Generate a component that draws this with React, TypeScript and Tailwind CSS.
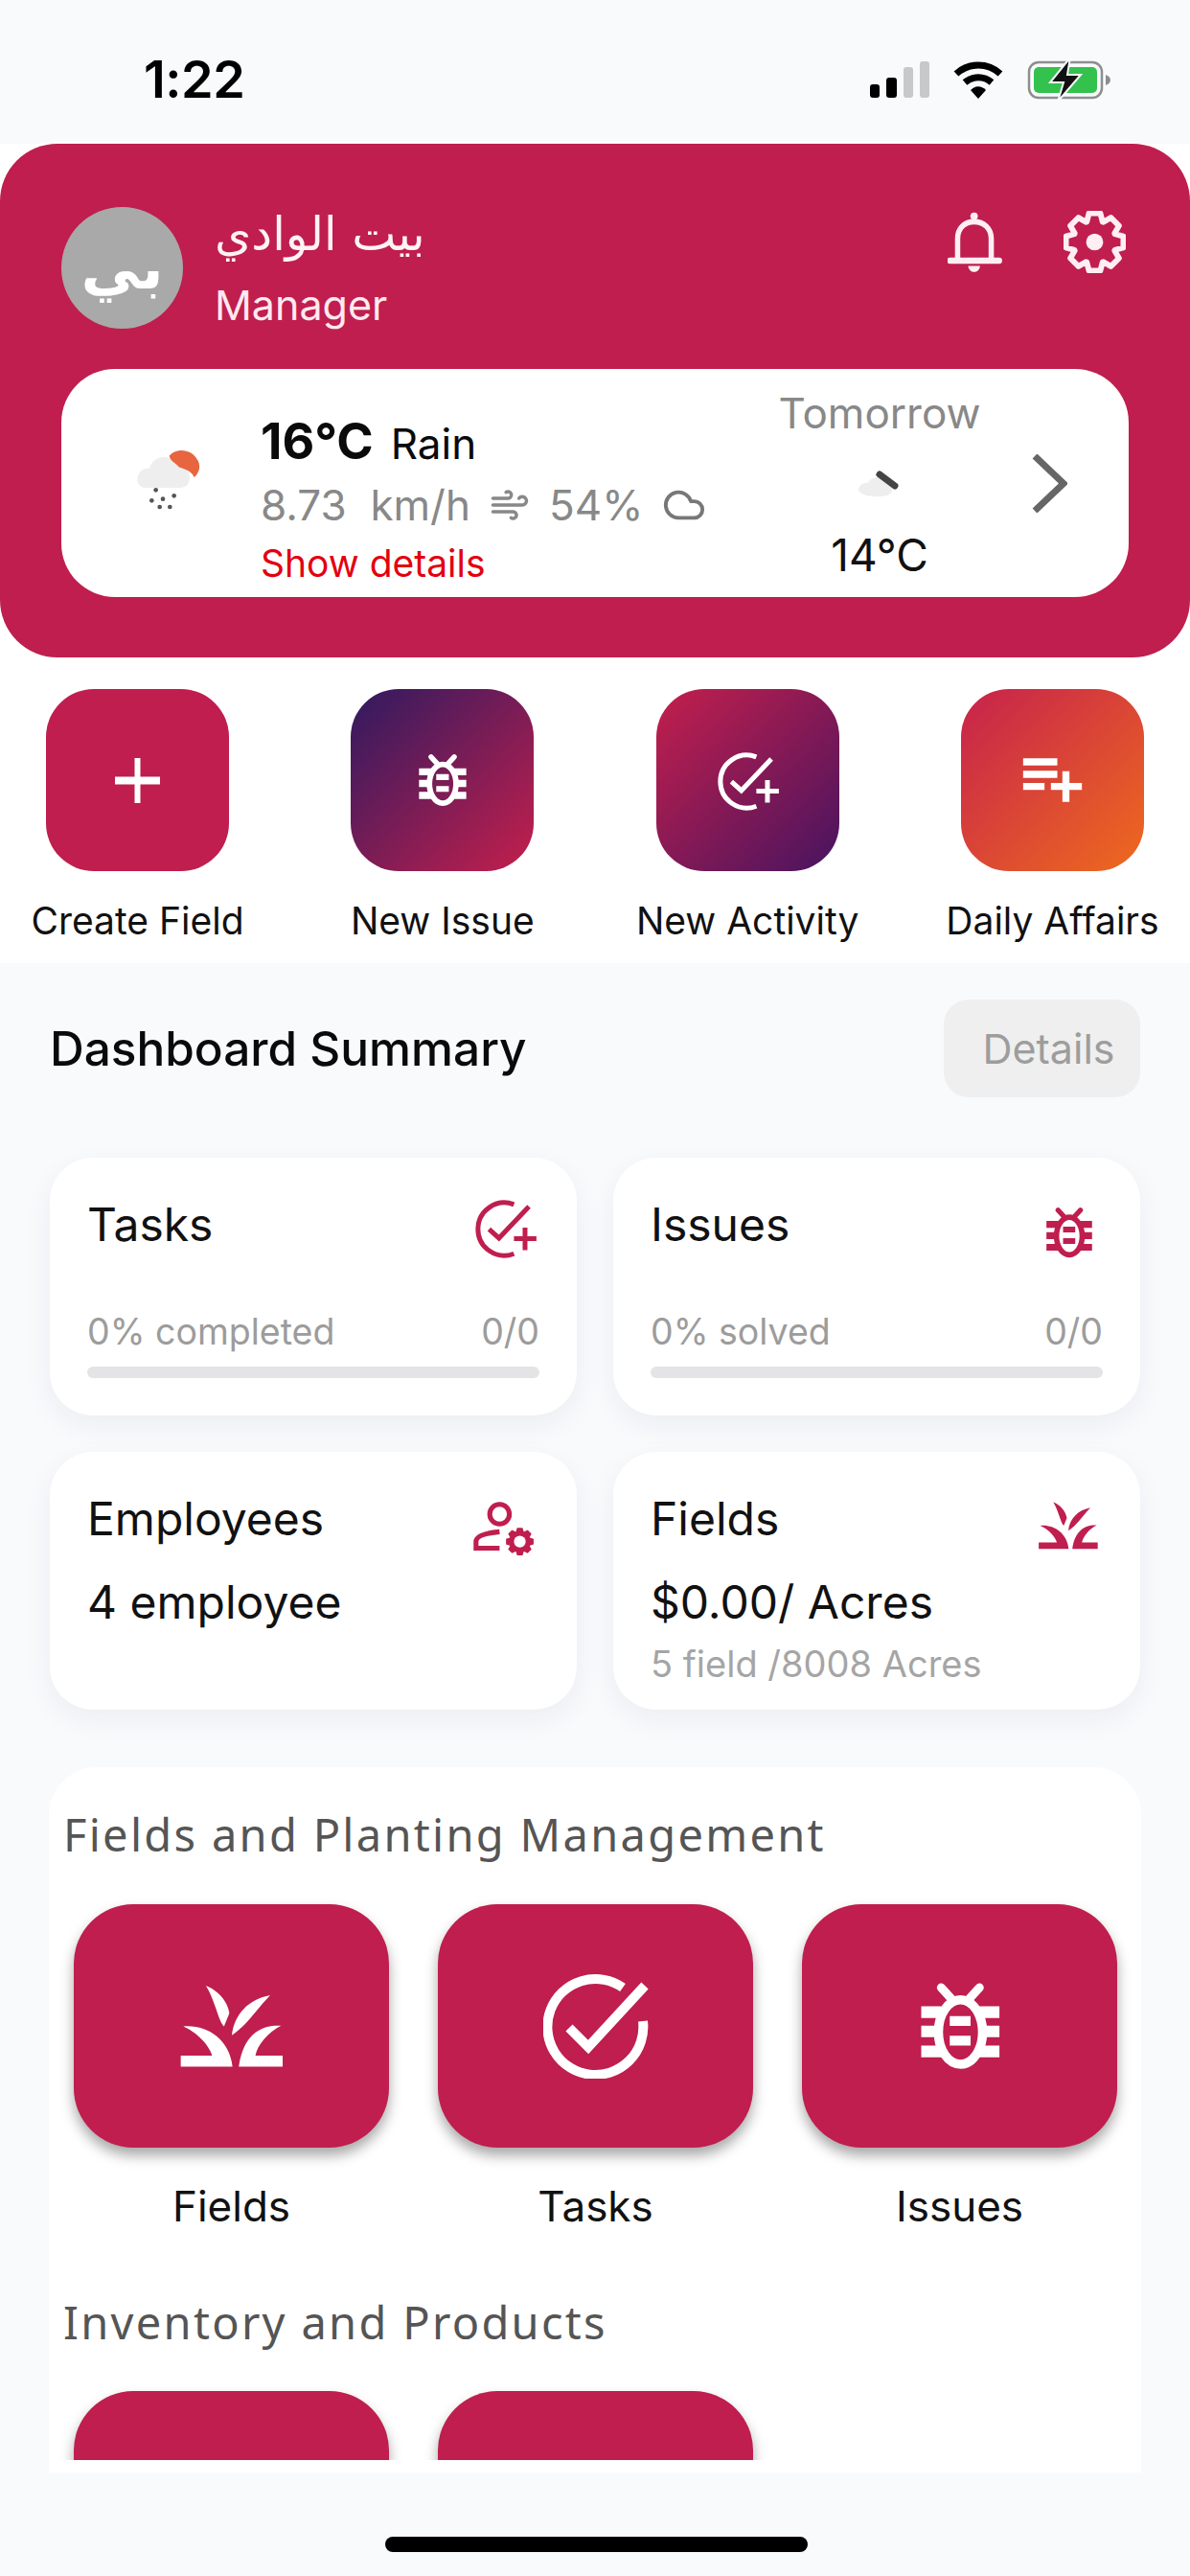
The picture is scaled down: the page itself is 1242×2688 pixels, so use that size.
import { Cloud, Wind } from 'lucide-react'

// 8-tooth cog outline, used by the header gear and the employee icon
function gearPath(cx: number, cy: number, outer: number, inner: number) {
  const pts: string[] = []
  for (let i = 0; i < 8; i++) {
    const a = (i * Math.PI) / 4 - Math.PI / 2
    const s = Math.PI / 8
    const steps: [number, number][] = [
      [a - s * 0.95, inner],
      [a - s * 0.5, outer],
      [a + s * 0.5, outer],
      [a + s * 0.95, inner],
    ]
    steps.forEach(([t, r]) => pts.push(`${(cx + r * Math.cos(t)).toFixed(1)} ${(cy + r * Math.sin(t)).toFixed(1)}`))
  }
  return `M${pts.join('L')}Z`
}

function BugIcon({ className }: { className: string }) {
  return (
    <svg viewBox="75 70 270 300" className={className} fill="none" stroke="currentColor">
      <path d="M85 175H150M85 238H145M85 303H150M275 175H340M280 238H340M275 303H340" strokeWidth="38" />
      <ellipse cx="213" cy="240" rx="72" ry="105" strokeWidth="30" />
      <path d="M150 95L182 130M275 95L243 130" strokeWidth="28" strokeLinecap="round" />
      <path d="M178 204H246M178 268H246" strokeWidth="32" />
    </svg>
  )
}

function TaskPlusIcon({ className }: { className: string }) {
  return (
    <svg viewBox="60 30 230 210" className={className} fill="none" stroke="currentColor" strokeWidth="16">
      <path d="M205 58A88 88 0 1 0 205 222" />
      <path d="M122 140L155 170L255 65" />
      <path d="M205 172H280M242 135V210" />
    </svg>
  )
}

function GrassIcon({ className }: { className: string }) {
  return (
    <svg viewBox="78 120 330 264" className={className} fill="currentColor">
      <path d="M160 122C195 135 230 170 235 210L218 252C200 235 190 170 160 122Z" />
      <path d="M365 153C300 165 250 210 243 280C290 250 320 200 365 153Z" />
      <path d="M88 252C160 245 235 290 245 380L80 380L80 345L180 345C170 310 130 270 88 252Z" />
      <path d="M400 250C340 245 280 275 265 380L405 380L405 345L318 345C325 310 360 270 400 250Z" />
    </svg>
  )
}

function UserCogIcon({ className }: { className: string }) {
  return (
    <svg viewBox="70 50 190 170" className={className} fill="none" stroke="currentColor" strokeWidth="15">
      <circle cx="150" cy="88" r="30" />
      <path d="M150 142C105 146 80 155 78 170V192H150" />
      <path d={gearPath(212, 172, 43, 33)} fill="currentColor" stroke="none" />
      <circle cx="212" cy="172" r="18" fill="white" stroke="none" />
    </svg>
  )
}

function BellIcon() {
  return (
    <svg viewBox="500 535 175 200" className="h-[65px] w-[57px] text-[#ffeef3]" fill="none" stroke="currentColor">
      <path d="M532 695V625C532 590 555 570 585 570C615 570 640 590 640 625V695" strokeWidth="17" />
      <path d="M508 695H665" strokeWidth="20" strokeLinecap="round" />
      <circle cx="585" cy="552" r="12" fill="currentColor" stroke="none" />
      <path d="M566 712H604C602 738 568 738 566 712Z" fill="currentColor" stroke="none" />
    </svg>
  )
}

function GearIcon() {
  return (
    <svg viewBox="0 0 66 66" className="h-[65px] w-[65px] text-[#ffeef3]" fill="none" stroke="currentColor" strokeWidth="6">
      <path d={gearPath(33, 33, 31, 23)} strokeLinejoin="round" />
      <circle cx="33" cy="33" r="9" fill="currentColor" stroke="none" />
    </svg>
  )
}

function RainIcon() {
  return (
    <svg viewBox="0 0 360 300" className="h-[100px] w-[120px] shrink-0">
      <path d="M70 140C70 115 90 102 108 105C115 75 150 60 175 75C215 85 245 120 230 150C220 170 190 165 170 165H100C85 165 70 158 70 140Z" fill="#eeeeee" />
      <path d="M170 65C190 40 240 40 260 80C270 100 262 120 248 132C240 110 210 105 200 100C190 85 175 85 170 65Z" fill="#e8663f" />
      <g fill="#555">
        <circle cx="128" cy="172" r="7" />
        <circle cx="115" cy="205" r="7" />
        <circle cx="150" cy="200" r="7" />
        <circle cx="185" cy="190" r="7" />
        <circle cx="140" cy="225" r="7" />
        <circle cx="172" cy="225" r="7" />
      </g>
    </svg>
  )
}

function TomorrowIcon() {
  return (
    <svg viewBox="0 0 48 30" className="h-[30px] w-[48px]">
      <path d="M2 22C2 16 8 13 12 14C15 7 26 6 32 12C38 14 40 22 34 26C28 29 8 30 2 22Z" fill="#eeeeee" />
      <path d="M24 5L40 17" stroke="#444" strokeWidth="7" strokeLinecap="round" />
    </svg>
  )
}

function StatusIcons() {
  return (
    <div className="flex items-center gap-[25px]">
      <div className="flex h-[38px] items-end gap-[7px]">
        <div className="h-[14px] w-[10px] rounded-[3px] bg-black" />
        <div className="h-[21px] w-[11px] rounded-[3px] bg-black" />
        <div className="h-[32px] w-[10px] rounded-[3px] bg-[#c8c8c8]" />
        <div className="h-[38px] w-[10px] rounded-[3px] bg-[#c8c8c8]" />
      </div>
      <svg viewBox="0 0 52 40" className="h-[40px] w-[52px]" fill="none" stroke="black" strokeWidth="7">
        <path d="M3 14C16 2 36 2 49 14" />
        <path d="M12 23C20 16 32 16 40 23" />
        <path d="M18 31L26 40L34 31C29 26 23 26 18 31Z" fill="black" stroke="none" />
      </svg>
      <svg viewBox="0 0 88 46" className="h-[46px] w-[88px]">
        <rect x="2" y="5" width="76" height="37" rx="10" fill="none" stroke="#8e8e8e" strokeWidth="2.5" />
        <rect x="7" y="10" width="66" height="27" rx="5" fill="#33c24d" />
        <path d="M82 18C85 19 87 21 87 23.500C87 26 85 28 82 29Z" fill="#8e8e8e" />
        <path d="M45 0L24 26H38L32 46L56 18H42Z" fill="#111" stroke="#f9fafc" strokeWidth="2" />
      </svg>
    </div>
  )
}

const quickActions = [
  { label: 'Create Field', bg: 'bg-[#bf1e4e]', icon: <svg viewBox="0 0 47 47" className="h-[47px] w-[47px]" stroke="currentColor"><path d="M0 23.500H47" strokeWidth="8" /><path d="M23.500 0V47" strokeWidth="6" /></svg> },
  { label: 'New Issue', bg: 'bg-linear-to-br/srgb from-[#2f1a60] to-[#c41f4c]', icon: <BugIcon className="h-[58px] w-[53px]" /> },
  { label: 'New Activity', bg: 'bg-linear-to-br/srgb from-[#c41f4c] to-[#47145f]', icon: <TaskPlusIcon className="h-[66px] w-[72px]" /> },
  {
    label: 'Daily Affairs',
    bg: 'bg-linear-to-br/srgb from-[#c6224c] to-[#ee6a1e]',
    icon: (
      <svg viewBox="80 65 200 150" className="h-[50px] w-[67px]" fill="none" stroke="currentColor" strokeWidth="22">
        <path d="M88 83H195M88 122H195M88 160H155M175 160H272M222 112V208" />
      </svg>
    ),
  },
]

function StatCard({ title, icon, children }: { title: string; icon: React.ReactNode; children: React.ReactNode }) {
  return (
    <div className="flex h-[269px] flex-col rounded-[45px] bg-white px-[39px] pb-[39px] pt-[42px] shadow-[0_10px_30px_rgba(30,40,70,0.06)]">
      <div className="flex h-[56px] items-start justify-between">
        <span className="text-[48px] leading-[56px] text-[#111]">{title}</span>
        <div className="text-[#bf1e4e]">{icon}</div>
      </div>
      {children}
    </div>
  )
}

function Progress({ label, count }: { label: string; count: string }) {
  return (
    <div className="mt-auto">
      <div className="flex justify-between text-[37.500px] leading-[44px] text-[#9c9c9c]">
        <span>{label}</span>
        <span>{count}</span>
      </div>
      <div className="mt-[14px] h-[12px] rounded-full bg-[#e4e4e6]" />
    </div>
  )
}

function Tile({ icon, label }: { icon?: React.ReactNode; label?: string }) {
  return (
    <div className="flex w-[329px] flex-col items-center">
      <div className="flex h-[254px] w-[329px] items-center justify-center rounded-[62px] bg-[#bf1e4e] text-white shadow-[0_8px_14px_rgba(0,0,0,0.35)]">
        {icon}
      </div>
      {label && <div className="mt-[36px] text-[44px] leading-[50px] text-[#111]">{label}</div>}
    </div>
  )
}

export default function App() {
  return (
    <div className="h-[2688px] w-[1242px] overflow-hidden bg-[#f9fafc] font-[Inter,sans-serif]">
      {/* status bar */}
      <div className="flex h-[150px] items-center justify-between pl-[150px] pr-[82px] pt-[16px]">
        <span className="text-[54px] font-semibold leading-none tracking-[-0.5px] text-black">1:22</span>
        <StatusIcons />
      </div>

      <div className="bg-white">
        {/* header */}
        <div className="h-[536px] rounded-[60px] bg-[#bf1e4e] px-[64px] pt-[66px]">
          <div className="flex items-start">
            <div className="flex h-[127px] w-[127px] items-center justify-center rounded-full bg-[#a9a9a9] font-['DejaVu_Sans',sans-serif] text-[62px] font-bold text-white">
              بي
            </div>
            <div className="ml-[33px] flex flex-col">
              <span className="font-['DejaVu_Sans',sans-serif] text-[49px] leading-[58px] text-[#fff2f5]" dir="rtl">
                بيت الوادي
              </span>
              <span className="mt-[20px] text-[43px] leading-[48px] text-[#ffe9ef]">Manager</span>
            </div>
            <div className="ml-auto mr-[3px] mt-[4px] flex items-center gap-[64px]">
              <BellIcon />
              <GearIcon />
            </div>
          </div>

          {/* weather card */}
          <div className="mt-[42px] flex h-[238px] items-center rounded-[56px] bg-white pl-[56px] pr-[64px]">
            <RainIcon />
            <div className="ml-[32px] flex flex-col pt-[34px]">
              <div className="flex items-baseline gap-[18px] text-[#0a0a0a]">
                <span className="text-[52px] font-bold leading-[60px]">16°C</span>
                <span className="text-[44px] leading-[60px]">Rain</span>
              </div>
              <div className="mt-[6px] flex items-center text-[44px] leading-[56px] text-[#888]">
                <span className="whitespace-pre">8.73  km/h</span>
                <Wind size={42} strokeWidth={2} className="ml-[20px]" />
                <span className="ml-[20px]">54%</span>
                <Cloud size={46} strokeWidth={2} className="ml-[20px] text-[#777]" />
              </div>
              <span className="mt-[10px] text-[39px] leading-[46px] text-[#e3000f]">Show details</span>
            </div>
            <div className="ml-auto flex w-[210px] flex-col items-center">
              <span className="text-[44px] leading-[54px] text-[#888]">Tomorrow</span>
              <div className="mt-[32px]">
                <TomorrowIcon />
              </div>
              <span className="mt-[34px] text-[46px] leading-[50px] text-[#111]">14°C</span>
            </div>
            <svg viewBox="0 0 37 61" className="ml-[54px] h-[61px] w-[37px]" fill="none" stroke="#666" strokeWidth="7">
              <path d="M3 2L33 30.500L3 59" />
            </svg>
          </div>
        </div>

        {/* quick actions */}
        <div className="flex h-[319px] justify-between px-[48px] pt-[33px]">
          {quickActions.map(a => (
            <div key={a.label} className="flex w-[191px] flex-col items-center">
              <div className={`flex h-[190px] w-[191px] items-center justify-center rounded-[50px] text-white ${a.bg}`}>
                {a.icon}
              </div>
              <span className="mt-[30px] whitespace-nowrap text-[39px] leading-[44px] text-[#111]">{a.label}</span>
            </div>
          ))}
        </div>
      </div>

      {/* dashboard summary */}
      <div className="px-[52px] pt-[38px]">
        <div className="flex h-[102px] items-center justify-between">
          <span className="text-[49.500px] font-medium text-[#0a0a0a]">Dashboard Summary</span>
          <div className="flex h-[102px] w-[205px] items-center justify-center rounded-[26px] bg-[#efefef] pl-[14px] text-[43px] text-[#9d9d9d]">
            Details
          </div>
        </div>

        <div className="mt-[63px] grid grid-cols-2 gap-[38px]">
          <StatCard title="Tasks" icon={<TaskPlusIcon className="-mt-[2px] h-[66px] w-[72px]" />}>
            <Progress label="0% completed" count="0/0" />
          </StatCard>
          <StatCard title="Issues" icon={<BugIcon className="mr-[10px] mt-[8px] h-[56px] w-[51px]" />}>
            <Progress label="0% solved" count="0/0" />
          </StatCard>
          <StatCard title="Employees" icon={<UserCogIcon className="mr-[4px] mt-[10px] h-[58px] w-[65px]" />}>
            <span className="mt-[31px] text-[48px] leading-[56px] text-[#111]">4 employee</span>
          </StatCard>
          <StatCard title="Fields" icon={<GrassIcon className="mt-[10px] mr-[4px] h-[50px] w-[64px]" />}>
            <span className="mt-[31px] text-[48px] leading-[56px] text-[#111]">$0.00/ Acres</span>
            <span className="mt-[14px] text-[38px] leading-[44px] text-[#a5a5a5]">5 field /8008 Acres</span>
          </StatCard>
        </div>

        {/* management panel */}
        <div className="-mx-px mt-[60px] h-[736px] rounded-t-[50px] bg-white">
          <div className="h-[723px] overflow-hidden px-[15px] pt-[40px]">
            <div className="font-['Noto_Sans',sans-serif] text-[47px] leading-[60px] tracking-[2.300px] text-[#555]">
              Fields and Planting Management
            </div>
            <div className="ml-[11px] mt-[43px] flex gap-[51px]">
              <Tile label="Fields" icon={<GrassIcon className="h-[87px] w-[108px]" />} />
              <Tile
                label="Tasks"
                icon={
                  <svg viewBox="0 0 110 110" className="h-[110px] w-[110px]" fill="none" stroke="currentColor" strokeWidth="10">
                    <path d="M83 15A50 50 0 1 0 104 50" />
                    <path d="M27 57L47 77L106 13" strokeWidth="10" />
                  </svg>
                }
              />
              <Tile label="Issues" icon={<BugIcon className="h-[96px] w-[87px]" />} />
            </div>
            <div className="mt-[66px] font-['Noto_Sans',sans-serif] text-[47px] leading-[60px] tracking-[2.300px] text-[#555]">
              Inventory and Products
            </div>
            <div className="ml-[11px] mt-[42px] flex gap-[51px]">
              <Tile />
              <Tile />
            </div>
          </div>
        </div>

        {/* home indicator */}
        <div className="ml-[350px] mt-[67px] h-[16px] w-[441px] rounded-full bg-black" />
      </div>
    </div>
  )
}
